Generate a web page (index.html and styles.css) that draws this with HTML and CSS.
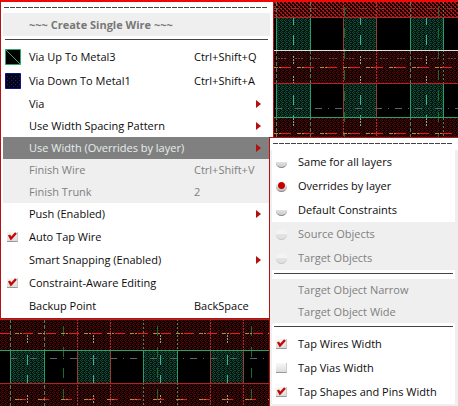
FILE: index.html
```html
<!DOCTYPE html>
<html lang="en">
<head>
<meta charset="utf-8">
<title>Create Single Wire</title>
<link rel="stylesheet" href="styles.css">
</head>
<body>
<svg class="layout" aria-hidden="true" shape-rendering="crispEdges">
  <defs>
    <pattern id="metal" width="4" height="4" patternUnits="userSpaceOnUse">
      <path fill="#100000" d="M0 0h4v4H0z"/><path fill="#4e0b0b" d="M0 0h1v1H0zM2 0h1v1H2zM1 1h1v1H1zM3 2h1v1H3zM1 3h1v1H1zM2 2h1v1H2z"/>
    </pattern>
    <pattern id="metal-top" width="4" height="4" patternUnits="userSpaceOnUse">
      <path fill="#260000" d="M0 0h4v4H0z"/><path fill="#a51c1c" d="M0 0h2v1H0zM2 2h2v1H2zM1 1h1v1H1zM3 3h1v1H3z"/>
    </pattern>
    <pattern id="via" width="4" height="4" patternUnits="userSpaceOnUse">
      <path fill="#04140e" d="M0 0h4v4H0z"/><path fill="#124c36" d="M0 0h1v1H0zM2 0h1v1H2zM1 1h1v1H1zM3 2h1v1H3zM1 3h1v1H1zM2 2h1v1H2z"/>
    </pattern>
  </defs>
  <rect width="100%" height="100%" fill="#000"/>
  <rect y="2" width="100%" height="15" fill="url(#metal-top)"/>
  <g fill="url(#metal)">
    <rect y="51" width="100%" height="32"/><rect y="118" width="100%" height="20"/>
    <rect y="319" width="100%" height="31"/><rect y="384" width="100%" height="40"/>
  </g>
  <g fill="url(#via)">
    <path d="M277 18h33v32h-33zM344 18h32v32h-32zM411 18h32v32h-32zM277 84h33v33h-33zM344 84h32v33h-32zM411 84h32v33h-32z"/>
    <path d="M11 351h33v32H11zM78 351h32v32H78zM144 351h33v32h-33zM211 351h32v32h-32z"/>
  </g>
  <g fill="none">
    <path stroke="#4f8055" stroke-dasharray="4 2" d="M276.500 2v136M310.500 2v136M410.500 2v136M10.500 319v87M44.500 319v87"/>
    <path stroke="#4f8055" stroke-dasharray="2 2" d="M443.500 2v136M143.500 319v87M177.500 319v87"/>
    <path stroke="#b52929" stroke-dasharray="2 1" d="M343.500 2v136M376.500 2v136M77.500 319v87M110.500 319v87M210.500 319v87M243.500 319v87"/>
    <path stroke="#279b69" d="M276.500 18v32M310.500 18v32M410.500 18v32M443.500 18v32M276.500 84v33M310.500 84v33M410.500 84v33M443.500 84v33M10.500 351v32M44.500 351v32M143.500 351v32M177.500 351v32"/>
    <path stroke="#923d32" d="M343.500 18v32M376.500 18v32M343.500 84v33M376.500 84v33M77.500 351v32M110.500 351v32M210.500 351v32M243.500 351v32"/>
    <path stroke="#176e28" stroke-dasharray="10 11" d="M344.500 7v131M438.500 7v131M63.500 326v80M157.500 326v80M251.500 326v80"/>
    <path stroke="#83ad91" stroke-dasharray="2 1 2 1 2 12" d="M293.500 56v27M360.500 56v27M426.500 56v27M293.500 118v20M360.500 118v20M426.500 118v20M27.500 335v15M93.500 335v15M160.500 335v15M227.500 335v15M27.500 395v11M93.500 395v11M160.500 395v11M227.500 395v11"/>
    <path stroke="#31b7a0" stroke-dasharray="7 10 10 80" d="M293.500 18v32M360.500 18v32M426.500 18v32"/>
    <path stroke="#31b7a0" d="M293.500 95v10M360.500 95v10M426.500 95v10M293.500 115v4M360.500 115v4M426.500 115v4M27.500 355v10M93.500 355v10M160.500 355v10M227.500 355v10M27.500 375v8M93.500 375v8M160.500 375v8M227.500 375v8"/>
    <path stroke="#713d3d" stroke-dasharray="2 1 2 1 2 9" d="M274 8.500h190M278 58.500h190"/>
    <path stroke="#59646a" stroke-dasharray="7 6 1 6" d="M275 108.500h190M10 358.500h260"/>
    <g stroke="#e51b1b" stroke-dasharray="10 13">
      <path d="M281 67.500h190"/><path d="M281 133.500h190"/><path d="M0 333.500h270"/><path d="M16 399.500h260"/>
    </g>
    <g stroke="#b88938" stroke-dasharray="4 1 2 16">
      <path d="M274 67.500h190"/><path d="M274 133.500h190"/><path d="M15 333.500h260"/><path d="M15 399.500h260"/>
    </g>
    <path stroke="#b42323" d="M270 17.500h999M270 83.500h999M0 319.500h270M0 383.500h270"/>
    <path stroke="#e2e2e2" d="M270 50.500h999"/>
    <path stroke="#29a36c" d="M270 117.500h999M0 350.500h270"/>
  </g>
  <rect width="100%" height="2" fill="#f00808"/>
</svg>

<svg class="defs" aria-hidden="true">
  <symbol id="arrow" viewBox="0 0 5 8"><path fill="#b50f0f" d="M0 0l5 4-5 4z"/></symbol>
</svg>

<main class="desk">
  <div class="menu main-menu">
    <div class="tear"></div>
    <h1 class="title">~~~ Create Single Wire ~~~</h1>
    <hr class="rule">
    <button class="item tall">
      <svg class="swatch" viewBox="0 0 16 16"><path fill="#000" stroke="#2fa56e" d="M.5.500h15v15H.5zM1 1l14 14"/></svg>
      <span>Via Up To Metal3</span><kbd>Ctrl+Shift+Q</kbd></button>
    <button class="item tall">
      <svg class="swatch" viewBox="0 0 16 16"><path fill="#03031c" stroke="#11118c" d="M.5.500h15v15H.5z"/><path stroke="#20206e" stroke-dasharray="1 3" d="M2 3.500h13M4 5.500h11M2 7.500h13M4 9.500h11M2 11.500h13M4 13.500h11"/></svg>
      <span>Via Down To Metal1</span><kbd>Ctrl+Shift+A</kbd></button>
    <button class="item"><span>Via</span><svg class="arrow"><use href="#arrow"/></svg></button>
    <button class="item"><span>Use Width Spacing Pattern</span><svg class="arrow"><use href="#arrow"/></svg></button>
    <button class="item active"><span>Use Width (Overrides by layer)</span><svg class="arrow"><use href="#arrow"/></svg></button>
    <button class="item" disabled><span>Finish Wire</span><kbd>Ctrl+Shift+V</kbd></button>
    <button class="item" disabled><span>Finish Trunk</span><kbd>2</kbd></button>
    <button class="item"><span>Push (Enabled)</span><svg class="arrow"><use href="#arrow"/></svg></button>
    <label class="item tall"><input type="checkbox" checked><span>Auto Tap Wire</span></label>
    <button class="item"><span>Smart Snapping (Enabled)</span><svg class="arrow"><use href="#arrow"/></svg></button>
    <label class="item tall"><input type="checkbox" checked><span>Constraint-Aware Editing</span></label>
    <button class="item"><span>Backup Point</span><kbd>BackSpace</kbd></button>
  </div>

  <div class="menu sub-menu">
    <div class="tear"></div>
    <label class="item tall"><input type="radio" name="width"><span>Same for all layers</span></label>
    <label class="item tall"><input type="radio" name="width" checked><span>Overrides by layer</span></label>
    <label class="item tall"><input type="radio" name="width"><span>Default Constraints</span></label>
    <label class="item tall off"><input type="radio" name="width" disabled><span>Source Objects</span></label>
    <label class="item tall off"><input type="radio" name="width" disabled><span>Target Objects</span></label>
    <hr class="rule">
    <button class="item" disabled><span>Target Object Narrow</span></button>
    <button class="item" disabled><span>Target Object Wide</span></button>
    <hr class="rule">
    <label class="item tall"><input type="checkbox" checked><span>Tap Wires Width</span></label>
    <label class="item tall"><input type="checkbox"><span>Tap Vias Width</span></label>
    <label class="item tall"><input type="checkbox" checked><span>Tap Shapes and Pins Width</span></label>
  </div>
</main>
</body>
</html>
```
FILE: styles.css
```css
* { box-sizing: border-box; }

body {
  margin: 0;
  min-height: 100vh;
  background: #000;
  color: #0c0c0c;
  font: 11px/16px "Open Sans", "Noto Sans", sans-serif;
  overflow: hidden;
}

.layout {
  position: absolute;
  inset: 0;
  width: 100%;
  height: 100%;
}

.defs { display: none; }

.desk {
  position: relative;
  display: grid;
  grid-template-columns: 269px 1fr;
  align-items: start;
}

.menu {
  display: flex;
  flex-direction: column;
  background: #fff;
}

.main-menu {
  margin-right: -5px;
  padding: 0 3px 1px 2px;
  border: 1px solid #b51212;
  border-top: 2px solid #f00808;
}

.sub-menu {
  position: relative;
  grid-column: 2;
  margin-top: 137px;
  padding: 0 3px 2px 2px;
  border-left: 1px solid #b51212;
  border-top: 1px solid #b51212;
  background: #f0eeee;
}

.desk > .menu { grid-row: 1; }

.tear {
  height: 11px;
  margin-right: 2px;
  background: repeating-linear-gradient(90deg, #444 0 5px, #fff 5px 6px) 1px 5px / 100% 1px no-repeat #fff;
}

.sub-menu .tear {
  height: 12px;
  margin: 0 -3px 0 -2px;
  border: solid #fff;
  border-width: 0 5px 0 3px;
  background-position: 0 5px;
}

.title {
  margin: 0;
  padding: 4px 0 3px 26px;
  background: #efefef;
  color: #777;
  font-size: 11px;
  font-weight: 700;
  line-height: 16px;
}

.rule {
  width: 100%;
  height: 9px;
  margin: 0;
  border: solid #fff;
  border-width: 3px 2px 5px;
  background: #444;
}

.item {
  display: grid;
  grid-template-columns: 26px 165px 1fr;
  align-items: center;
  width: 100%;
  height: 22px;
  margin: 0;
  padding: 0;
  border: 0;
  background: #fff;
  color: inherit;
  font: inherit;
  text-align: left;
  white-space: nowrap;
}

.sub-menu .item { grid-template-columns: 26px 1fr; }

.tall { height: 24px; }

.item > span { grid-column: 2; }
.item > kbd { grid-column: 3; font: inherit; }

.item:disabled, .off { background: #efefef; color: #808080; }

.active { background: #808080; color: #e6eeee; }

.swatch { width: 16px; height: 16px; margin-left: 2px; }

.arrow {
  grid-column: 3;
  justify-self: end;
  width: 5px;
  height: 8px;
  margin-right: 9px;
}

input {
  appearance: none;
  width: 11px;
  height: 10px;
  margin: 0 0 0 4px;
  background: linear-gradient(#f8f8f8, #dcdcdc);
  border-bottom: 1px solid #999;
  border-right: 1px solid #ccc;
}

input[type="checkbox"]:checked {
  background:
    url("data:image/svg+xml,%3Csvg xmlns='http://www.w3.org/2000/svg' viewBox='0 0 10 9'%3E%3Cpath fill='none' stroke='%23c40808' stroke-width='2.400' d='M2 3l2 3.500L9 1'/%3E%3C/svg%3E") 0 0 / 10px 9px no-repeat,
    linear-gradient(#f8f8f8, #dcdcdc);
}

input[type="radio"] {
  height: 11px;
  border-radius: 50%;
  border: 0;
  border-bottom: 1px solid #888;
  background: linear-gradient(#fff 45%, #e2e2e2 50%, #ccc);
}

input[type="radio"]:checked {
  background:
    radial-gradient(circle at 50% 45%, #c40000 0 3px, transparent 4px),
    linear-gradient(#fff 20%, #ddd 50%, #bbb);
}

input[type="radio"]:disabled {
  border-color: #c8c8c8;
  background: linear-gradient(#f4f4f4 45%, #e4e4e4 50%, #ddd);
}
```
